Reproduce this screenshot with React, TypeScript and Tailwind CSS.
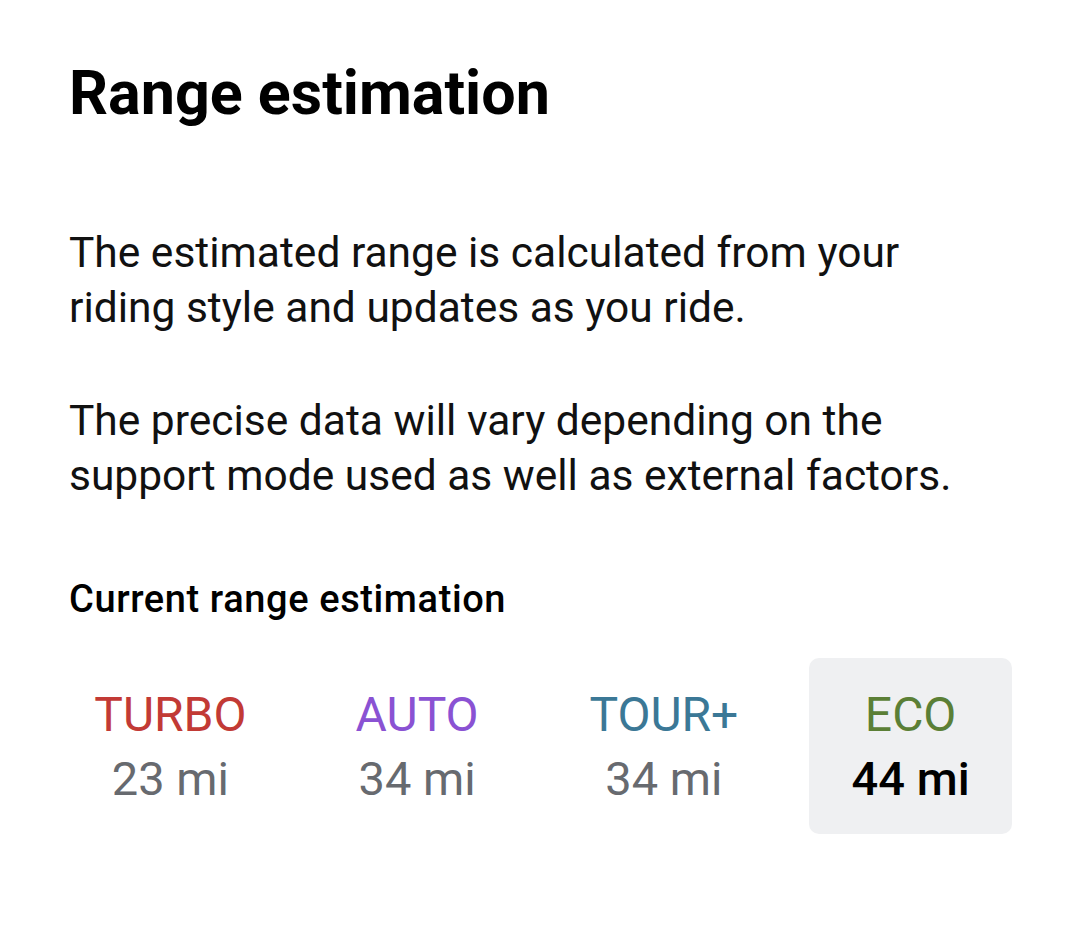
export default function App() {
  const modes = [
    { name: "TURBO", value: "23 mi", color: "text-[#c23a35]", selected: false },
    { name: "AUTO", value: "34 mi", color: "text-[#8a52d3]", selected: false },
    { name: "TOUR+", value: "34 mi", color: "text-[#3b7896]", selected: false },
    { name: "ECO", value: "44 mi", color: "text-[#5b7f36]", selected: true },
  ];
  return (
    <div className="w-[1080px] h-[944px] bg-white font-['Roboto',sans-serif] text-black pl-[69px] pr-[68px] pt-[57px]">
      <h1 className="text-[61px] leading-[72px] font-bold">Range estimation</h1>
      <div className="mt-[96px] w-[900px] text-[42.5px] leading-[55px] text-[#111]">
        <p>The estimated range is calculated from your riding style and updates as you ride.</p>
        <p className="mt-[58px]">The precise data will vary depending on the support mode used as well as external factors.</p>
      </div>
      <h2 className="mt-[74px] text-[38px] leading-[44px] font-medium tracking-[0.6px]">Current range estimation</h2>
      <div className="mt-[37px] grid grid-cols-4 gap-x-[44px]">
        {modes.map((m) => (
          <div
            key={m.name}
            className={`h-[176px] rounded-[10px] flex flex-col items-center justify-center ${m.selected ? "bg-[#eff0f2]" : ""}`}
          >
            <div className={`text-[48px] leading-[58px] ${m.color}`}>{m.name}</div>
            <div className={`mt-[7px] text-[47px] leading-[56px] ${m.selected ? "text-black font-medium" : "text-[#676a6f]"}`}>{m.value}</div>
          </div>
        ))}
      </div>
    </div>
  );
}
